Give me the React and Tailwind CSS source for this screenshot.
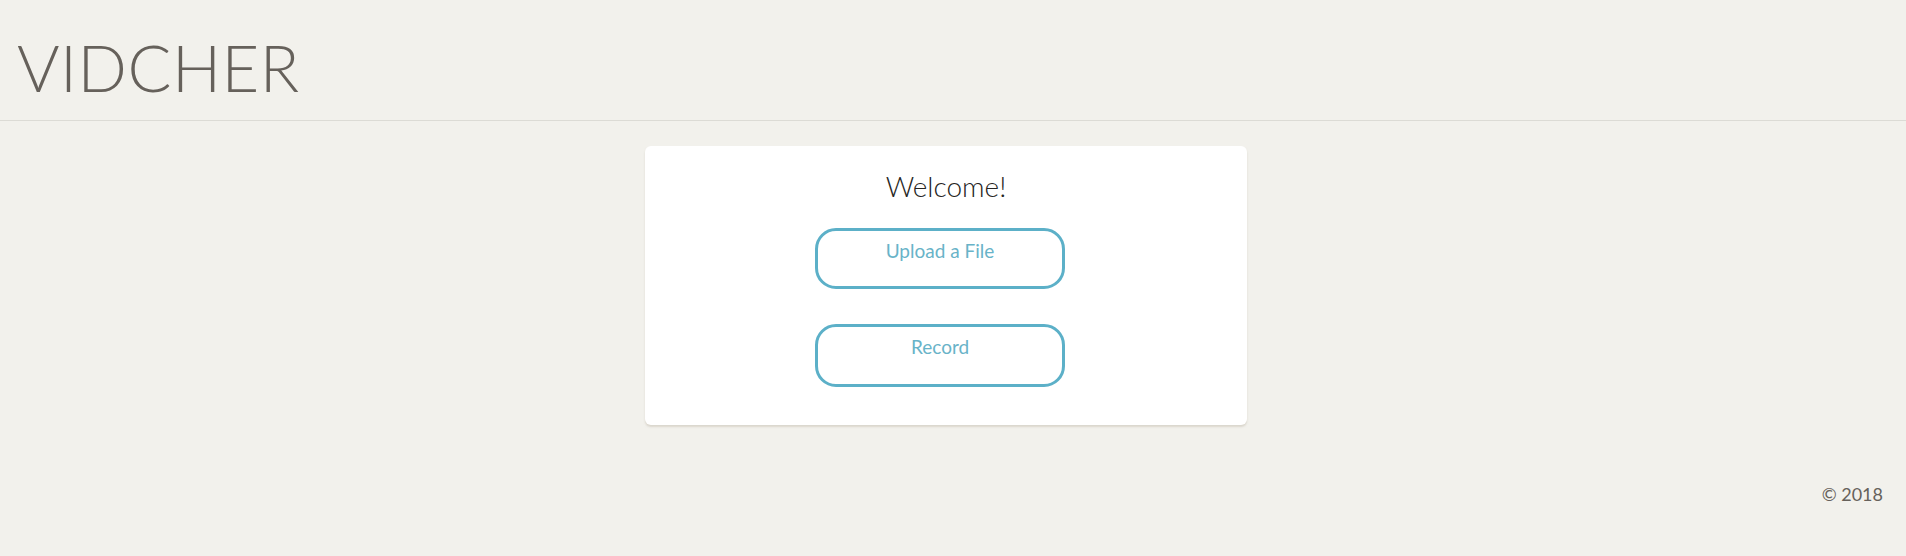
export default function App() {
  return (
    <div className="min-h-[556px] w-full bg-[#f2f1ec] text-[#66615b]" style={{ fontFamily: 'Lato, "Open Sans", sans-serif' }}>
      <header className="flex h-[121px] items-center border-b border-[#dcdbd5] pl-[17px] pt-[14px]">
        <h1 className="text-[65px] font-light leading-none tracking-[0.5px] text-[#66615b]">VIDCHER</h1>
      </header>
      <main className="pt-[25px]">
        <div className="ml-[645px] flex w-[602px] flex-col items-center rounded-[6px] bg-white pb-[38px] pt-[20px] shadow-[0_2px_2px_rgba(204,197,185,0.6)]">
          <h2 className="text-[28px] font-light leading-[40px] text-[#252422]">Welcome!</h2>
          <button className="mr-[12px] mt-[22px] flex h-[61px] w-[250px] justify-center rounded-[21px] border-[3px] border-[#5cb0c8] pt-[8px] text-[19px] leading-[24px] text-[#68b3c8]">
            Upload a File
          </button>
          <button className="mr-[12px] mt-[35px] flex h-[63px] w-[250px] justify-center rounded-[21px] border-[3px] border-[#5cb0c8] pt-[8px] text-[19px] leading-[24px] text-[#68b3c8]">
            Record
          </button>
        </div>
      </main>
      <footer className="flex justify-end pr-[23px] pt-[57px]">
        <span className="text-[18px] leading-[24px] text-[#66615b]">© 2018</span>
      </footer>
    </div>
  );
}
